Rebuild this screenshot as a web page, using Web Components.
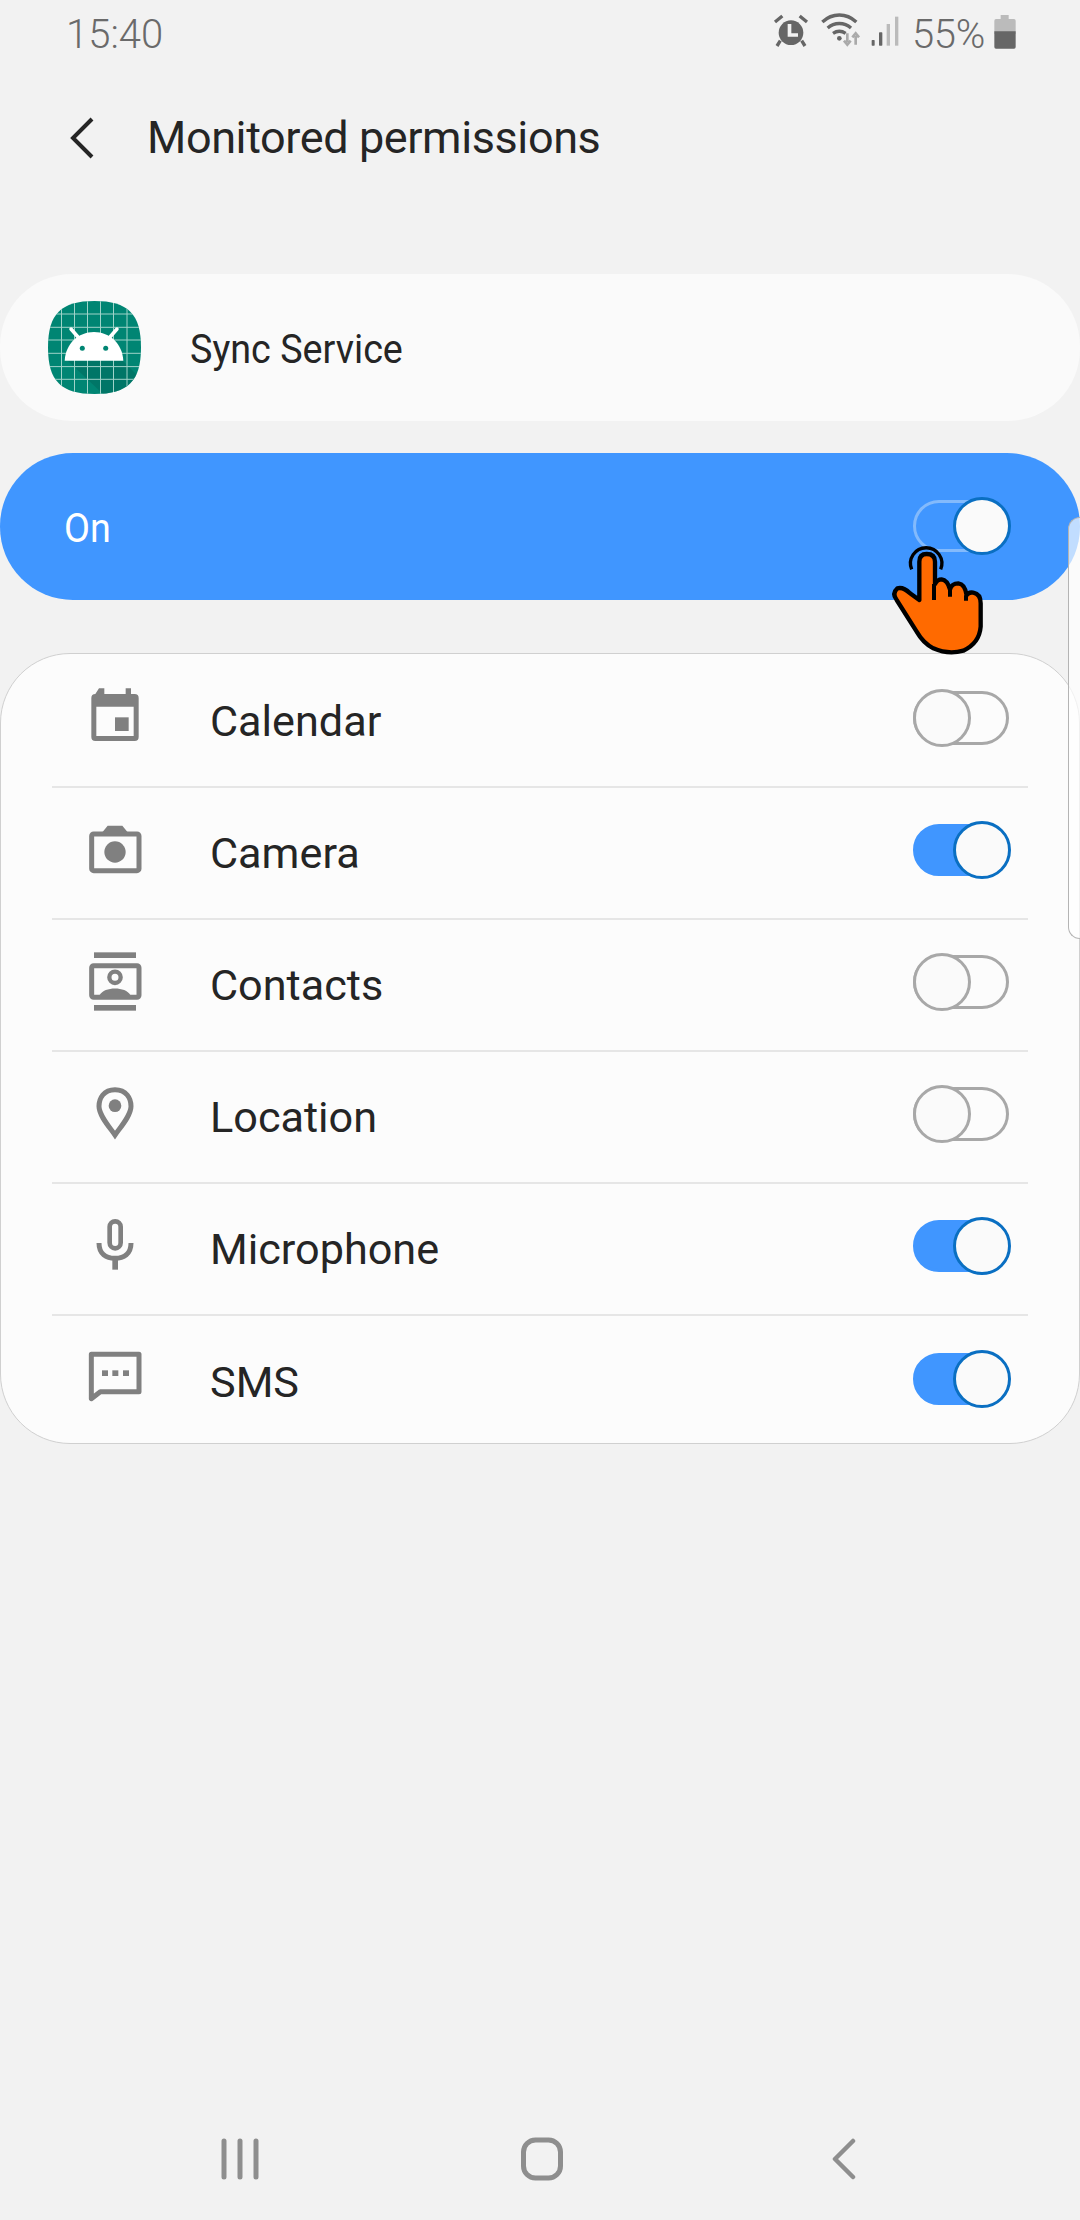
<!DOCTYPE html>
<html>
<head>
<meta charset="utf-8">
<title>Monitored permissions</title>
<style>
    html, body { margin: 0; padding: 0; background: #f2f2f2; }
    body { width: 1080px; height: 2220px; overflow: hidden; position: relative; font-family: Roboto, "Liberation Sans", sans-serif; }
</style>
</head>
<body>
<phone-screen>
    <status-bar></status-bar>
    <title-bar>Monitored permissions</title-bar>
    <app-card>Sync Service</app-card>
    <master-switch>On</master-switch>
    <permission-list>
        <permission-row icon="calendar">Calendar</permission-row>
        <permission-row icon="camera" on>Camera</permission-row>
        <permission-row icon="contacts">Contacts</permission-row>
        <permission-row icon="location">Location</permission-row>
        <permission-row icon="mic" on>Microphone</permission-row>
        <permission-row icon="sms" on last>SMS</permission-row>
    </permission-list>
    <nav-bar></nav-bar>
</phone-screen>
<scroll-thumb></scroll-thumb>
<touch-hand></touch-hand>

<script>
class BaseElement extends HTMLElement {
    constructor(html) {
        super();
        this.attachShadow({ mode: 'open' });
        this.shadowRoot.innerHTML = html;
    }
}

class PhoneScreen extends BaseElement {
    constructor() {
        super(`<style>
            :host { display: flex; flex-direction: column; height: 2220px; }
        </style><slot></slot>`);
    }
}

class StatusBar extends BaseElement {
    constructor() {
        super(`<style>
            :host { display: flex; align-items: center; height: 66px; padding: 0 64px 0 66px; color: #6a6a6a; font: 300 40px Roboto, sans-serif; }
            .time { flex: 1; margin-top: 2px; }
            svg { display: block; fill: #666; }
            .pct { margin: 2px 9px 0 0; letter-spacing: -0.3px; }
        </style>
        <span class="time">15:40</span>
        <svg width="142" height="60" viewBox="0 0 426 180" style="margin:-6px 1px 0 0">
            <circle cx="66" cy="98" r="37"/>
            <path d="M56 72h11v28h20v10H56z" fill="#f2f2f2"/>
            <path d="M18 66L40 48M114 66L92 48" stroke="#666" stroke-width="10" fill="none"/>
            <path d="M34 122L24 138M98 122L108 138" stroke="#666" stroke-width="10" fill="none"/>
            <g fill="none" stroke="#666" stroke-width="10">
                <path d="M160 66C190 38 232 38 262 66"/>
                <path d="M176 84C196 66 226 66 246 84"/>
                <path d="M192 100C204 92 218 92 230 100"/>
            </g>
            <circle cx="211" cy="115" r="7"/>
            <path d="M235 100v26M225 122l10 12 10-12M260 134v-26M250 112l10-12 10 12" fill="none" stroke="#aaa" stroke-width="8"/>
            <rect x="308" y="120" width="9" height="17" rx="2"/>
            <rect x="330" y="97" width="10" height="40" rx="2"/>
            <rect x="353" y="72" width="10" height="65" fill="#bbb"/>
            <rect x="378" y="50" width="10" height="87" fill="#bbb"/>
        </svg>
        <span class="pct">55%</span>
        <svg width="22" height="34" viewBox="0 0 66 102" style="margin-top:-2px">
            <path d="M20 0h24v12h16q5 0 5 5v40H1V17q0-5 5-5h14z" fill="#bbb"/>
            <path d="M1 49h64v47q0 5-5 5H6q-5 0-5-5z" fill="#666"/>
        </svg>`);
    }
}

class TitleBar extends BaseElement {
    constructor() {
        super(`<style>
            :host { display: flex; align-items: center; height: 143px; padding-left: 68px; margin-bottom: 65px; color: #252525; font: 400 45px Roboto, sans-serif; }
            svg { display: block; margin-right: 50px; }
            span { letter-spacing: -0.4px; }
        </style>
        <svg width="29" height="44" viewBox="0 0 29 44"><path d="M24 3L5 22l19 19" fill="none" stroke="#252525" stroke-width="4"/></svg>
        <span><slot></slot></span>`);
    }
}

class AppCard extends BaseElement {
    constructor() {
        super(`<style>
            :host { display: flex; align-items: center; height: 147px; padding-left: 48px; background: #fafafa; border-radius: 72px; margin-bottom: 32px; color: #252525; font: 400 41px Roboto, sans-serif; }
            svg { display: block; margin-right: 49px; }
            span { display: inline-block; transform: scaleX(.92); transform-origin: left; margin-top: 2px; }
        </style>
        <svg width="93" height="93" viewBox="0 0 93 93">
            <defs><clipPath id="sq"><path d="M46.5 0C80 0 93 13 93 46.5S80 93 46.5 93 0 80 0 46.5 13 0 46.5 0z"/></clipPath></defs>
            <g clip-path="url(#sq)">
                <rect width="93" height="93" fill="#008573"/>
                <path d="M20 60h55L93 78v15H55z" fill="#00695c" opacity=".55"/>
                <path d="M13.5 0v93M26.5 0v93M39.5 0v93M52.5 0v93M65.5 0v93M79 0v93M0 13h93M0 26.3h93M0 39h93M0 52.3h93M0 65.6h93M0 78.3h93" stroke="#9fd3c9" stroke-width="1" fill="none"/>
            </g>
            <path d="M16.7 59.7C17.5 43 30 31 46 31s28.500 12 29.300 28.700z" fill="#fff"/>
            <path d="M30 36L23 28M62 36l7-8" stroke="#fff" stroke-width="3.500" stroke-linecap="round"/>
            <circle cx="34.300" cy="47.300" r="2.500" fill="#008573"/>
            <circle cx="57.700" cy="47.300" r="2.500" fill="#008573"/>
        </svg>
        <span><slot></slot></span>`);
    }
}

class ToggleSwitch extends BaseElement {
    constructor() {
        super(`<style>
            :host { display: block; position: relative; width: 96px; height: 56px; box-sizing: border-box; }
            .track { position: absolute; left: 0; right: 0; top: 1px; height: 54px; box-sizing: border-box; border-radius: 27px; border: 3px solid #a8a8a8; }
            .thumb { position: absolute; left: 0; top: -1px; width: 58px; height: 58px; box-sizing: border-box; border-radius: 50%; border: 3px solid #a8a8a8; background: #fafafa; }
            :host([on]) .track { background: #4096ff; border-color: #4096ff; top: 2px; height: 52px; }
            :host([on]) .thumb { left: 40px; border-color: #0a6fc2; }
            :host([on][master]) .track { background: none; border-color: #83bafc; }
        </style><div class="track"></div><div class="thumb"></div>`);
    }
}

class MasterSwitch extends BaseElement {
    constructor() {
        super(`<style>
            :host { display: flex; align-items: center; justify-content: space-between; height: 147px; padding: 0 71px 0 64px; background: #4096ff; border-radius: 73px; margin-bottom: 53px; color: #fff; font: 400 41px Roboto, sans-serif; }
            span { display: inline-block; transform: scaleX(.92); transform-origin: left; margin-top: 2px; }
            toggle-switch { margin-top: -2px; }
        </style>
        <span><slot></slot></span>
        <toggle-switch on master></toggle-switch>`);
    }
}

class PermissionList extends BaseElement {
    constructor() {
        super(`<style>
            :host { display: block; box-sizing: border-box; height: 791px; padding-top: 2px; background: #fcfcfc; border: 1px solid #d0d0d0; border-radius: 70px; }
        </style><slot></slot>`);
    }
}

const ICONS = {
    calendar: `<svg width="72" height="72" viewBox="58 42 216 216">
        <path fill-rule="evenodd" d="M118 58h16v17h64V58h16v17h11q12 0 12 12v117q0 12-12 12H107q-12 0-12-12V87q0-12 12-12zM110 113v88h112v-88z"/>
        <rect x="166" y="145" width="41" height="41"/></svg>`,
    camera: `<svg width="72" height="72" viewBox="58 438 216 216">
        <rect x="96" y="495" width="142" height="110" rx="6" fill="none" stroke="#808080" stroke-width="15"/>
        <path d="M128 490l16-20h44l16 20z"/><circle cx="166" cy="549" r="32"/></svg>`,
    contacts: `<svg width="72" height="72" viewBox="58 834 216 216">
        <rect x="103" y="850" width="126" height="17"/><rect x="103" y="1008" width="126" height="17"/>
        <rect x="96" y="890" width="142" height="95" rx="6" fill="none" stroke="#808080" stroke-width="15"/>
        <circle cx="166" cy="925" r="17" fill="none" stroke="#808080" stroke-width="13"/>
        <path d="M120 978C134 952 198 952 212 978z"/></svg>`,
    location: `<svg width="72" height="72" viewBox="58 60 216 216">
        <path d="M166 92C132 92 118 118 118 142 118 170 150 205 166 228 182 205 214 170 214 142 214 118 200 92 166 92z" fill="none" stroke="#808080" stroke-width="15"/>
        <circle cx="166" cy="140" r="19"/></svg>`,
    mic: `<svg width="72" height="72" viewBox="58 456 216 216">
        <rect x="150" y="487" width="33" height="81" rx="16.500" fill="none" stroke="#808080" stroke-width="14"/>
        <path d="M118 552C118 585 140 598 166 598S214 585 214 552" fill="none" stroke="#808080" stroke-width="15"/>
        <rect x="158" y="598" width="17" height="34"/></svg>`,
    sms: `<svg width="72" height="72" viewBox="58 852 216 216">
        <path d="M95 883H238V995H122L95 1016z" fill="none" stroke="#808080" stroke-width="15" stroke-linejoin="round"/>
        <rect x="127" y="931" width="18" height="17"/><rect x="158" y="931" width="18" height="17"/><rect x="190" y="931" width="18" height="17"/></svg>`
};

class PermissionRow extends BaseElement {
    constructor() {
        super(`<style>
            :host { display: block; height: 132px; padding: 0 51px; color: #252525; font: 400 43.2px Roboto, sans-serif; }
            .inner { display: flex; align-items: center; box-sizing: border-box; height: 132px; padding-bottom: 4px; border-bottom: 2px solid #e6e6e6; }
            :host([last]) .inner { border-bottom: none; }
            .icon { width: 72px; height: 72px; margin-left: 27px; margin-right: 59px; fill: #808080; }
            .icon svg { display: block; }
            .label { flex: 1; margin-top: 4px; }
            toggle-switch { margin-right: 19px; margin-top: -2px; }
        </style>
        <div class="inner">
            <div class="icon"></div>
            <span class="label"><slot></slot></span>
            <toggle-switch></toggle-switch>
        </div>`);
    }

    connectedCallback() {
        this.shadowRoot.querySelector('.icon').innerHTML = ICONS[this.getAttribute('icon')];
        if (this.hasAttribute('on')) {
            this.shadowRoot.querySelector('toggle-switch').setAttribute('on', '');
        }
    }
}

class NavBar extends BaseElement {
    constructor() {
        super(`<style>
            :host { display: flex; margin-top: auto; justify-content: space-between; align-items: center; height: 132px; padding: 9px 224px 0 218px; box-sizing: border-box; }
            svg { display: block; fill: none; stroke: #8e8e8e; stroke-linecap: round; stroke-linejoin: round; }
            .home { margin-right: 6px; }
        </style>
        <svg width="44" height="42" viewBox="0 0 44 42" stroke-width="5"><path d="M6 3v36M22 3v36M38 3v36"/></svg>
        <svg class="home" width="44" height="44" viewBox="0 0 44 44" stroke-width="5"><rect x="3.500" y="3" width="37" height="38" rx="12"/></svg>
        <svg width="28" height="42" viewBox="0 0 28 42" stroke-width="4.500"><path d="M25 3L7 21l18 18"/></svg>`);
    }
}

class ScrollThumb extends BaseElement {
    constructor() {
        super(`<style>
            :host { display: block; position: absolute; right: -12px; top: 517px; width: 24px; height: 422px; box-sizing: border-box; border: 1px solid #b4b4b4; border-right: none; border-radius: 12px 0 0 12px; background: rgba(255, 255, 255, .68); }
        </style>`);
    }
}

class TouchHand extends BaseElement {
    constructor() {
        super(`<style>
            :host { display: block; position: absolute; left: 860px; top: 440px; width: 220px; height: 240px; pointer-events: none; }
            svg { display: block; }
        </style>
        <svg width="220" height="240" viewBox="0 0 660 720">
            <path d="M155 388A47 47 0 1 1 242 388" fill="none" stroke="#000" stroke-width="10"/>
            <path d="M178 480V365Q178 342 200 342Q225 342 225 365V432Q232 418 245 418Q262 420 270 448Q275 430 295 430Q315 432 320 466Q326 455 340 458Q362 462 362 490V560Q358 610 310 632Q265 645 220 625Q190 610 170 575L110 480Q95 460 112 445Q130 440 150 460z" fill="#ff6a00" stroke="#000" stroke-width="13" stroke-linejoin="round"/>
            <path d="M222 432V480M270 448V470M318 466V482" stroke="#000" stroke-width="12" fill="none"/>
        </svg>`);
    }
}

customElements.define('phone-screen', PhoneScreen);
customElements.define('status-bar', StatusBar);
customElements.define('title-bar', TitleBar);
customElements.define('app-card', AppCard);
customElements.define('toggle-switch', ToggleSwitch);
customElements.define('master-switch', MasterSwitch);
customElements.define('permission-list', PermissionList);
customElements.define('permission-row', PermissionRow);
customElements.define('nav-bar', NavBar);
customElements.define('scroll-thumb', ScrollThumb);
customElements.define('touch-hand', TouchHand);
</script>
</body>
</html>
